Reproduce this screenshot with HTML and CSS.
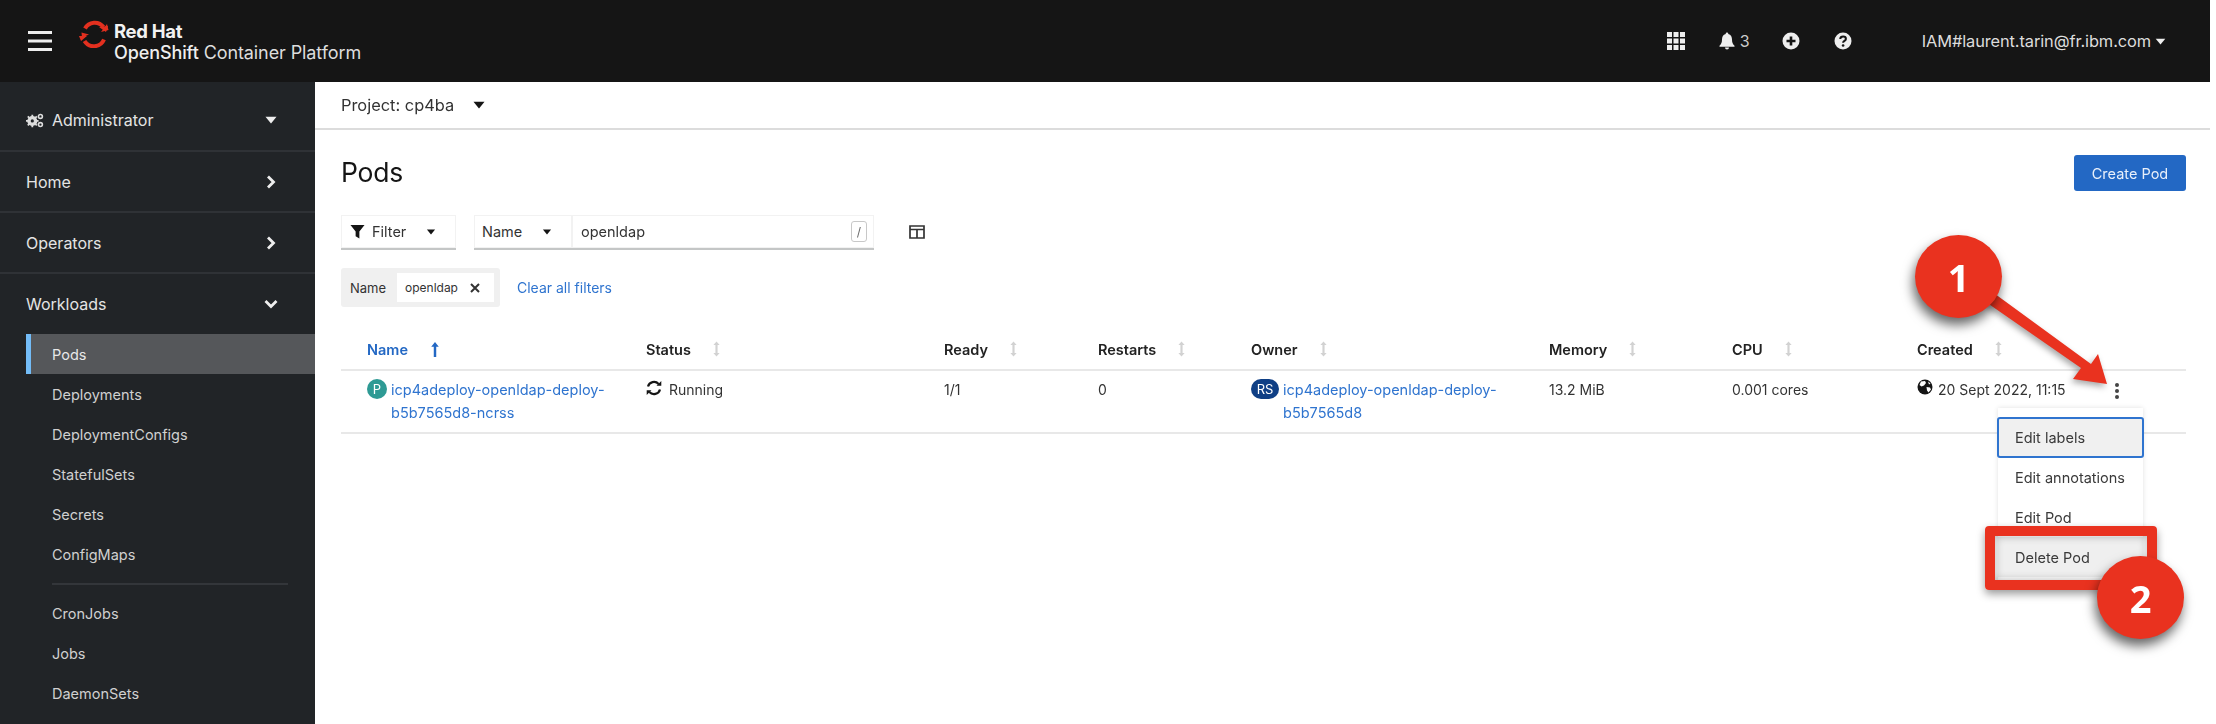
FILE: index.html
```html
<!DOCTYPE html>
<html lang="en">
<head>
<meta charset="utf-8">
<title>Pods - OpenShift Container Platform</title>
<link rel="stylesheet" href="styles.css">
</head>
<body>
<svg class="defs" width="0" height="0" aria-hidden="true">
  <symbol id="caret" viewBox="0 0 12 8"><path d="M0.5 0.8h11L6 7.4z" fill="currentColor"/></symbol>
  <symbol id="sort" viewBox="0 0 10 18"><path d="M5 0.5 8.5 4.5H6.2v9h2.3L5 17.5 1.5 13.5h2.3v-9H1.5z" fill="currentColor"/></symbol>
</svg>
<div class="app">
  <header class="topbar">
    <svg class="burger" viewBox="0 0 24 20"><path d="M0 1.5h24M0 10h24M0 18.5h24" stroke="currentColor" stroke-width="3.2"/></svg>
    <svg class="logo" viewBox="0 0 30 28">
      <path d="M6 8.5A11 11 0 0 1 24.5 7" fill="none" stroke="#e3301f" stroke-width="4"/>
      <path d="M25 19.5A11 11 0 0 1 5.5 21" fill="none" stroke="#e3301f" stroke-width="4"/>
      <path d="M2.5 12.5 10 14.5 3 17.5z M22 12 29.5 10 28 4z" fill="#e3301f"/>
      <path d="M20 7 29 6 27 12z M0 16 8 16 2 21z" fill="#e3301f"/>
    </svg>
    <div class="brand">
      <div class="brand-top">Red Hat</div>
      <div class="brand-sub"><b>OpenShift</b> Container Platform</div>
    </div>
    <div class="top-tools">
      <svg class="ti grid" viewBox="0 0 18 18"><path d="M0 0h5v5H0zM6.5 0h5v5h-5zM13 0h5v5h-5zM0 6.5h5v5H0zM6.5 6.5h5v5h-5zM13 6.5h5v5h-5zM0 13h5v5H0zM6.5 13h5v5h-5zM13 13h5v5h-5z" fill="currentColor"/></svg>
      <span class="bell-wrap">
        <svg class="ti bell" viewBox="0 0 16 18"><path d="M8 0.5c.8 0 1.3.6 1.3 1.4C12 2.5 13 4.8 13 7.5c0 3 .7 4.6 2.5 6.2v1H.5v-1C2.300 12.100 3 10.500 3 7.500c0-2.700 1-5 3.700-5.600C6.700 1.100 7.200.5 8 .5zM6 15.600h4a2 2 0 0 1-4 0z" fill="currentColor"/></svg>
        <span class="bell-n">3</span>
      </span>
      <svg class="ti plus" viewBox="0 0 18 18"><circle cx="9" cy="9" r="8.500" fill="currentColor"/><path d="M9 4.500v9M4.500 9h9" stroke="#151515" stroke-width="2.600"/></svg>
      <svg class="ti help" viewBox="0 0 18 18"><circle cx="9" cy="9" r="8.500" fill="currentColor"/><path d="M6.200 7c.2-1.600 1.400-2.400 2.900-2.400 1.600 0 2.800 1 2.800 2.300 0 2-2.800 2-2.800 3.900" fill="none" stroke="#151515" stroke-width="2"/><circle cx="9.100" cy="13.500" r="1.300" fill="#151515"/></svg>
      <span class="user">IAM#laurent.tarin@fr.ibm.com</span>
      <svg class="caret-user"><use href="#caret"/></svg>
    </div>
  </header>

  <div class="body">
    <nav class="sidebar">
      <div class="nav-row persp">
        <svg class="cogs" viewBox="0 0 20 16">
          <circle cx="7" cy="8.500" r="4" fill="none" stroke="currentColor" stroke-width="3.200"/>
          <path d="M7 1.500v14M0 8.500h14M2 3.500l10 10M12 3.500l-10 10" stroke="currentColor" stroke-width="2"/>
          <circle cx="7" cy="8.500" r="1.800" fill="#212427"/>
          <circle cx="16" cy="3.500" r="2.200" fill="none" stroke="currentColor" stroke-width="1.800"/>
          <circle cx="16" cy="12.500" r="2.200" fill="none" stroke="currentColor" stroke-width="1.800"/>
        </svg>
        <span class="persp-label">Administrator</span>
        <svg class="nav-caret"><use href="#caret"/></svg>
      </div>
      <div class="nav-row">Home<svg class="chev" viewBox="0 0 10 14"><path d="M2 1.500 7.500 7 2 12.500" fill="none" stroke="currentColor" stroke-width="2.800"/></svg></div>
      <div class="nav-row">Operators<svg class="chev" viewBox="0 0 10 14"><path d="M2 1.500 7.500 7 2 12.500" fill="none" stroke="currentColor" stroke-width="2.800"/></svg></div>
      <div class="nav-row open">Workloads<svg class="chev-d" viewBox="0 0 14 10"><path d="M1.500 2 7 7.500 12.500 2" fill="none" stroke="currentColor" stroke-width="2.800"/></svg></div>
      <ul class="subnav">
        <li class="current">Pods</li>
        <li>Deployments</li>
        <li>DeploymentConfigs</li>
        <li>StatefulSets</li>
        <li>Secrets</li>
        <li>ConfigMaps</li>
        <li class="sep" aria-hidden="true"></li>
        <li>CronJobs</li>
        <li>Jobs</li>
        <li>DaemonSets</li>
      </ul>
    </nav>

    <main class="main">
      <div class="projectbar">Project: cp4ba<svg class="dark-caret"><use href="#caret"/></svg></div>
      <div class="content">
        <div class="page-head">
          <h1>Pods</h1>
          <button class="primary">Create Pod</button>
        </div>
        <div class="toolbar">
          <div class="select filter">
            <svg class="funnel" viewBox="0 0 16 16"><path d="M0.500 1h15L10 8v7.500L6 13V8z" fill="currentColor"/></svg>
            <span>Filter</span>
            <svg class="dark-caret small"><use href="#caret"/></svg>
          </div>
          <div class="searchgroup">
            <div class="select name"><span>Name</span><svg class="dark-caret small"><use href="#caret"/></svg></div>
            <div class="search"><span>openldap</span><kbd>/</kbd></div>
          </div>
          <svg class="columns" viewBox="0 0 16 14"><path d="M1 1h14v12H1zM1 4.500h14M8 4.500V13" fill="none" stroke="currentColor" stroke-width="1.700"/></svg>
        </div>
        <div class="chips">
          <div class="chipgroup">
            <span class="chip-cat">Name</span>
            <span class="chip">openldap<svg class="x" viewBox="0 0 10 10"><path d="M1 1l8 8M9 1l-8 8" stroke="currentColor" stroke-width="2"/></svg></span>
          </div>
          <a class="clear">Clear all filters</a>
        </div>

        <div class="table">
          <div class="thead">
            <div class="th first active">Name<svg class="up" viewBox="0 0 10 18"><path d="M5 1 9 6H6.300v11H3.700V6H1z" fill="currentColor"/></svg></div>
            <div class="th">Status<svg class="sort"><use href="#sort"/></svg></div>
            <div class="th">Ready<svg class="sort"><use href="#sort"/></svg></div>
            <div class="th">Restarts<svg class="sort"><use href="#sort"/></svg></div>
            <div class="th">Owner<svg class="sort"><use href="#sort"/></svg></div>
            <div class="th">Memory<svg class="sort"><use href="#sort"/></svg></div>
            <div class="th">CPU<svg class="sort"><use href="#sort"/></svg></div>
            <div class="th">Created<svg class="sort"><use href="#sort"/></svg></div>
          </div>
          <div class="trow">
            <div class="td first res"><span class="badge pod">P</span><a>icp4adeploy-openldap-deploy-<br>b5b7565d8-ncrss</a></div>
            <div class="td status">
              <svg class="sync" viewBox="0 0 16 16"><path d="M2 6.500A6.200 6.200 0 0 1 12.600 4M14 9.500A6.200 6.200 0 0 1 3.400 12" fill="none" stroke="currentColor" stroke-width="2.200"/><path d="M10.500 5.800h4.800V1zM5.500 10.200H.7V15z" fill="currentColor"/></svg>
              Running
            </div>
            <div class="td">1/1</div>
            <div class="td">0</div>
            <div class="td res"><span class="badge rs">RS</span><a>icp4adeploy-openldap-deploy-<br>b5b7565d8</a></div>
            <div class="td">13.2 MiB</div>
            <div class="td">0.001 cores</div>
            <div class="td created">
              <svg class="globe" viewBox="0 0 16 16"><circle cx="8" cy="8" r="7.500" fill="currentColor"/><path d="M4 2.500 8 2l1 2-2 2.500-2.500 1-2-1.500zM9.500 8l3.500.5 1 2-2.500 3-1.500-2zM11 2.500l2.500 2-1.500 1z" fill="#fff"/></svg>
              <span>20 Sept 2022, 11:15</span>
              <svg class="kebab" viewBox="0 0 6 18"><circle cx="3" cy="3" r="2" fill="currentColor"/><circle cx="3" cy="9" r="2" fill="currentColor"/><circle cx="3" cy="15" r="2" fill="currentColor"/></svg>
              <ul class="menu">
                <li class="focus">Edit labels</li>
                <li>Edit annotations</li>
                <li>Edit Pod</li>
                <li class="hover">Delete Pod</li>
              </ul>
            </div>
          </div>
        </div>
      </div>
    </main>
  </div>

  <svg class="arrow" viewBox="0 0 130 100">
    <path d="M4 3 104 76 111 66 120 96 86 91 94 80 -4 12z" fill="#e9321f"/>
  </svg>
  <div class="redbox"></div>
  <div class="callout one">1</div>
  <div class="callout two">2</div>
</div>
</body>
</html>
```
FILE: styles.css
```css
* { box-sizing: border-box; }
html, body { margin: 0; padding: 0; background: #fff; }
body { width: 2216px; height: 724px; overflow: hidden; font-family: Inter, "Open Sans", sans-serif; color: #2b2d30; }
.defs { position: absolute; }
ul { list-style: none; margin: 0; padding: 0; }

.app { position: relative; width: 2210px; height: 724px; overflow: hidden; filter: blur(0.5px); }

/* masthead */
.topbar { height: 82px; background: #151515; color: #fff; display: flex; align-items: center; padding-left: 28px; }
.burger { width: 24px; height: 20px; margin-right: 27px; color: #eee; }
.logo { width: 30px; height: 28px; margin: -14px 5px 0 0; }
.brand { color: #ddd; }
.brand-top { font-size: 18.500px; font-weight: 700; line-height: 20px; color: #f2f2f2; letter-spacing: -0.3px; margin-top: 3px; }
.brand-sub { font-size: 18px; line-height: 24px; font-weight: 400; letter-spacing: -0.1px; }
.brand-sub b { font-weight: 500; color: #eee; }
.top-tools { margin-left: auto; display: flex; align-items: center; padding-right: 44px; color: #eee; }
.ti { display: block; }
.grid { width: 18px; height: 18px; margin-right: 34px; }
.bell-wrap { display: flex; align-items: center; gap: 5px; margin-right: 32px; }
.bell { width: 16px; height: 18px; }
.bell-n { font-size: 16px; color: #ccc; }
.plus { width: 18px; height: 18px; margin-right: 34px; }
.help { width: 18px; height: 18px; margin-right: 70px; }
.user { font-size: 16.400px; color: #ddd; letter-spacing: -0.1px; }
.caret-user { width: 11px; height: 7px; margin-left: 4px; color: #eee; }

.body { display: flex; height: 642px; }

/* sidebar */
.sidebar { width: 315px; flex: none; background: #212427; color: #e4e4e4; font-size: 16px; overflow: hidden; }
.nav-row { height: 61px; padding: 0 39px 0 26px; display: flex; align-items: center; border-bottom: 2px solid #2f3236; }
.persp { height: 70px; padding-top: 8px; }
.persp-label { margin-left: 8px; }
.cogs { width: 18px; height: 15px; color: #ddd; }
.nav-caret { width: 12px; height: 8px; margin-left: auto; margin-right: -1px; color: #eee; }
.chev { width: 10px; height: 14px; margin-left: auto; color: #eee; }
.chev-d { width: 14px; height: 10px; margin-left: auto; margin-right: -2px; color: #eee; }
.open { border-bottom: 0; height: 60px; }
.subnav { padding-left: 26px; font-size: 14.500px; color: #d0d0d0; }
.subnav li { height: 40px; padding-left: 26px; display: flex; align-items: center; }
.subnav .current { background: #55575a; border-left: 5px solid #73bcf7; padding-left: 21px; color: #e8e8e8; }
.subnav .sep { height: 2px; margin: 9px 27px 8px 26px; padding: 0; background: #33363a; }

/* main */
.main { flex: 1; min-width: 0; display: flex; flex-direction: column; }
.projectbar { height: 48px; padding: 0 0 0 26px; display: flex; align-items: center; font-size: 16.400px; color: #333; border-bottom: 2px solid #dcdcdc; }
.dark-caret { width: 12px; height: 8px; margin-left: 19px; color: #151515; }
.content { padding: 25px 24px 0 26px; }
.page-head { height: 36px; display: flex; align-items: center; justify-content: space-between; }
h1 { margin: -2px 0 0; font-size: 26.500px; font-weight: 400; color: #151515; letter-spacing: -0.2px; }
.primary { width: 112px; height: 36px; border: 0; border-radius: 3px; background: #2368c4; color: #e9f0fa; font: 14.500px Inter, sans-serif; padding: 0; }

.toolbar { margin-top: 24px; height: 35px; display: flex; align-items: stretch; }
.select { display: flex; align-items: center; font-size: 14.500px; color: #333; background: #fff; box-shadow: inset 0 0 0 1px #f2f2f2; border-bottom: 2px solid #c4c6c6; }
.filter { width: 115px; padding-left: 9px; }
.funnel { width: 15px; height: 15px; margin-right: 7px; color: #151515; }
.select .small { width: 10px; height: 6px; margin-left: auto; margin-right: 20px; }
.searchgroup { display: flex; margin-left: 18px; }
.select.name { width: 98px; padding-left: 8px; }
.select.name .small { margin-right: 20px; }
.search { width: 302px; padding: 0 7px 0 9px; display: flex; align-items: center; justify-content: space-between; font-size: 14.500px; color: #333; box-shadow: inset 0 0 0 1px #f2f2f2; border-bottom: 2px solid #c4c6c6; }
kbd { width: 16px; height: 21px; border: 1px solid #c8c8c8; border-radius: 3px; font: 12px Inter, sans-serif; display: flex; align-items: center; justify-content: center; color: #666; }
.columns { width: 16px; height: 14px; margin: 10px 0 0 35px; color: #333; }

.chips { margin-top: 18px; height: 39px; display: flex; align-items: center; }
.chipgroup { width: 159px; height: 39px; padding: 5px 6px 5px 9px; display: flex; align-items: center; justify-content: space-between; background: #f0f0f0; border-radius: 3px; font-size: 13px; color: #333; }
.chip { width: 97px; height: 29px; padding-left: 8px; display: flex; align-items: center; background: #fff; font-size: 12px; color: #333; }
.x { width: 10px; height: 10px; margin-left: 12px; color: #333; }
.clear { margin-left: 17px; font-size: 14px; color: #2f74cf; }

/* table */
.table { margin-top: 23px; }
.thead, .trow { display: grid; grid-template-columns: 305px 298px 154px 153px 298px 183px 185px 269px; }
.thead { height: 41px; border-bottom: 2px solid #e8e8e8; }
.th { display: flex; align-items: center; font-size: 14.500px; font-weight: 600; color: #222; padding-bottom: 1px; }
.first { padding-left: 26px; }
.active { color: #2368c4; }
.up { width: 10px; height: 17px; margin-left: 22px; color: #2368c4; }
.sort { width: 9px; height: 16px; margin-left: 21px; color: #d2d2d2; }
.trow { height: 63px; border-bottom: 2px solid #e8e8e8; }
.td { padding-top: 7px; font-size: 14px; line-height: 23px; color: #333; }
.res { display: flex; align-items: flex-start; }
.res a { color: #2f74cf; font-size: 14.500px; }
.badge { flex: none; margin: 1px 4px 0 0; height: 20px; border-radius: 10px; color: #fff; font-size: 13px; line-height: 20px; text-align: center; }
.pod { width: 20px; background: #2e9a94; }
.rs { width: 28px; background: #0f3f85; }
.status { display: flex; align-items: flex-start; gap: 7px; }
.sync { width: 16px; height: 16px; margin-top: 2px; color: #151515; }
.created { position: relative; display: flex; align-items: flex-start; }
.globe { width: 16px; height: 16px; margin: 1px 5px 0 0; color: #151515; }
.kebab { width: 6px; height: 18px; margin: 4px 0 0 auto; position: absolute; left: 197px; color: #444; }

.menu { position: absolute; left: 81px; top: 37px; width: 145px; padding: 9px 0; background: #fff; box-shadow: 0 0 5px rgba(0,0,0,.12); font-size: 14.500px; color: #3a3a3a; }
.menu li { height: 40px; padding-left: 17px; display: flex; align-items: center; }
.menu .focus { height: 41px; margin: 0 -1px -1px; padding-left: 16px; background: #f0f0f0; border: 2px solid #2f74cf; border-radius: 3px; }
.menu .hover { background: #efefef; }

/* annotations over the screenshot */
.callout { position: absolute; z-index: 3; width: 87px; height: 83px; border-radius: 50%; background: #e9321f; color: #fff; font-family: "Open Sans", sans-serif; font-size: 38px; font-weight: 700; display: flex; align-items: center; justify-content: center; box-shadow: -2px 7px 12px rgba(0,0,0,.6); }
.one { left: 1915px; top: 235px; }
.two { left: 2097px; top: 556px; }
.arrow { position: absolute; z-index: 2; left: 1987px; top: 288px; width: 130px; height: 100px; overflow: visible; filter: drop-shadow(-2px 3px 3px rgba(0,0,0,.35)); }
.redbox { position: absolute; z-index: 2; left: 1985px; top: 526px; width: 172px; height: 64px; border: 10px solid #e9321f; border-radius: 4px; box-shadow: 0 4px 8px rgba(0,0,0,.4), inset 0 0 8px rgba(0,0,0,.3); }
```
